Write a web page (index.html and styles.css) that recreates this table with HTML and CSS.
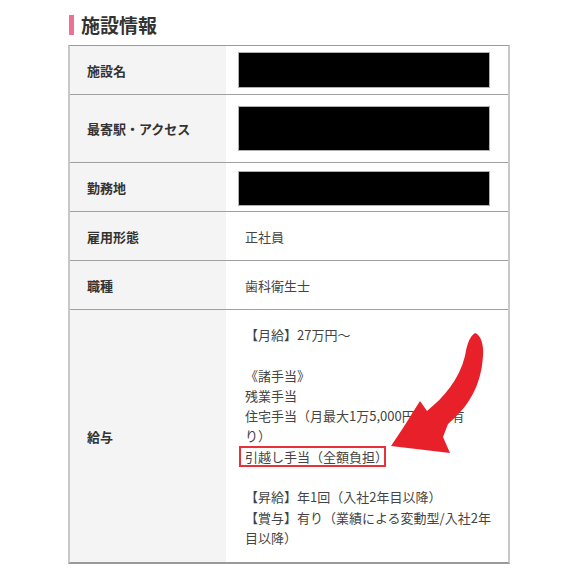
FILE: index.html
```html
<!DOCTYPE html>
<html lang="ja">
<head>
<meta charset="utf-8">
<title>施設情報</title>
<link rel="stylesheet" href="styles.css">
</head>
<body>
<div class="page">
  <h2 class="heading"><span class="heading-bar"></span>施設情報</h2>
  <div class="info-table">
    <div class="row">
      <div class="label">施設名</div>
      <div class="value"><div class="redacted h36"></div></div>
    </div>
    <div class="row tall">
      <div class="label">最寄駅・アクセス</div>
      <div class="value"><div class="redacted h45"></div></div>
    </div>
    <div class="row">
      <div class="label">勤務地</div>
      <div class="value"><div class="redacted h35"></div></div>
    </div>
    <div class="row">
      <div class="label">雇用形態</div>
      <div class="value">正社員</div>
    </div>
    <div class="row">
      <div class="label">職種</div>
      <div class="value">歯科衛生士</div>
    </div>
    <div class="row salary">
      <div class="label">給与</div>
      <div class="value"><p class="salary-text">【月給】27万円～<br><br>《諸手当》<br>残業手当<br>住宅手当（月最大1万5,000円 / 条件有<br>り）<br><span class="highlight">引越し手当（全額負担）</span><br><br>【昇給】年1回（入社2年目以降）<br>【賞与】有り（業績による変動型/入社2年<br>目以降）</p></div>
    </div>
  </div>
</div>
<svg class="arrow" width="576" height="576" viewBox="0 0 576 576" aria-hidden="true">
  <path d="M475 333 C481 335 484 345 483 356 C481 387 468 407 448 424 L443 437 L450 453 L391 446 L403 428 L420 401 L427 411 C444 397 459 380 465 356 C467 345 469 337 475 333 Z" fill="#e8202a"/>
</svg>
</body>
</html>
```
FILE: styles.css
```css
html, body {
  margin: 0;
  padding: 0;
  background: #fff;
}
body {
  position: relative;
  width: 576px;
  height: 576px;
  overflow: hidden;
  font-family: "Noto Sans CJK JP", "Noto Sans", sans-serif;
  color: #333;
}
.page {
  padding: 15px 66px 0 68px;
}
.heading {
  display: flex;
  align-items: center;
  gap: 7px;
  height: 20px;
  margin: 0 0 10px 1px;
  font-size: 19px;
  font-weight: bold;
  line-height: 20px;
  color: #333;
}
.heading-bar {
  display: block;
  width: 5px;
  height: 20px;
  background: #f07095;
}
.info-table {
  border-top: 1px solid #9a9a9a;
  border-left: 2px solid #c8c8c8;
  border-right: 2px solid #c8c8c8;
  border-bottom: 2px solid #9a9a9a;
}
.row {
  display: grid;
  grid-template-columns: 156px 1fr;
  min-height: 48px;
  border-bottom: 1px solid #a0a0a0;
}
.row:last-child {
  border-bottom: none;
}
.row.tall {
  min-height: 67px;
}
.label {
  display: flex;
  align-items: center;
  padding-left: 17px;
  background: #f4f4f4;
  font-size: 13px;
  font-weight: bold;
  color: #333;
}
.value {
  display: flex;
  align-items: center;
  padding: 0 12px 0 19px;
  font-size: 13px;
  color: #444;
}
.redacted {
  box-sizing: border-box;
  width: 252px;
  margin-left: -7px;
  background: #000;
  border: 1px solid #b0b0b0;
}
.h36 { height: 36px; }
.h45 { height: 45px; }
.h35 { height: 35px; margin-top: 3px; }
.salary .value {
  align-items: flex-start;
  padding-top: 15px;
  padding-bottom: 14px;
}
.salary-text {
  margin: 0;
  line-height: 20.3px;
  white-space: nowrap;
}
.highlight {
  position: relative;
}
.highlight::after {
  content: "";
  position: absolute;
  left: -6px;
  right: 2px;
  top: -1px;
  bottom: -1px;
  border: 2px solid #e8323a;
}
.arrow {
  position: absolute;
  left: 0;
  top: 0;
  pointer-events: none;
}
```
